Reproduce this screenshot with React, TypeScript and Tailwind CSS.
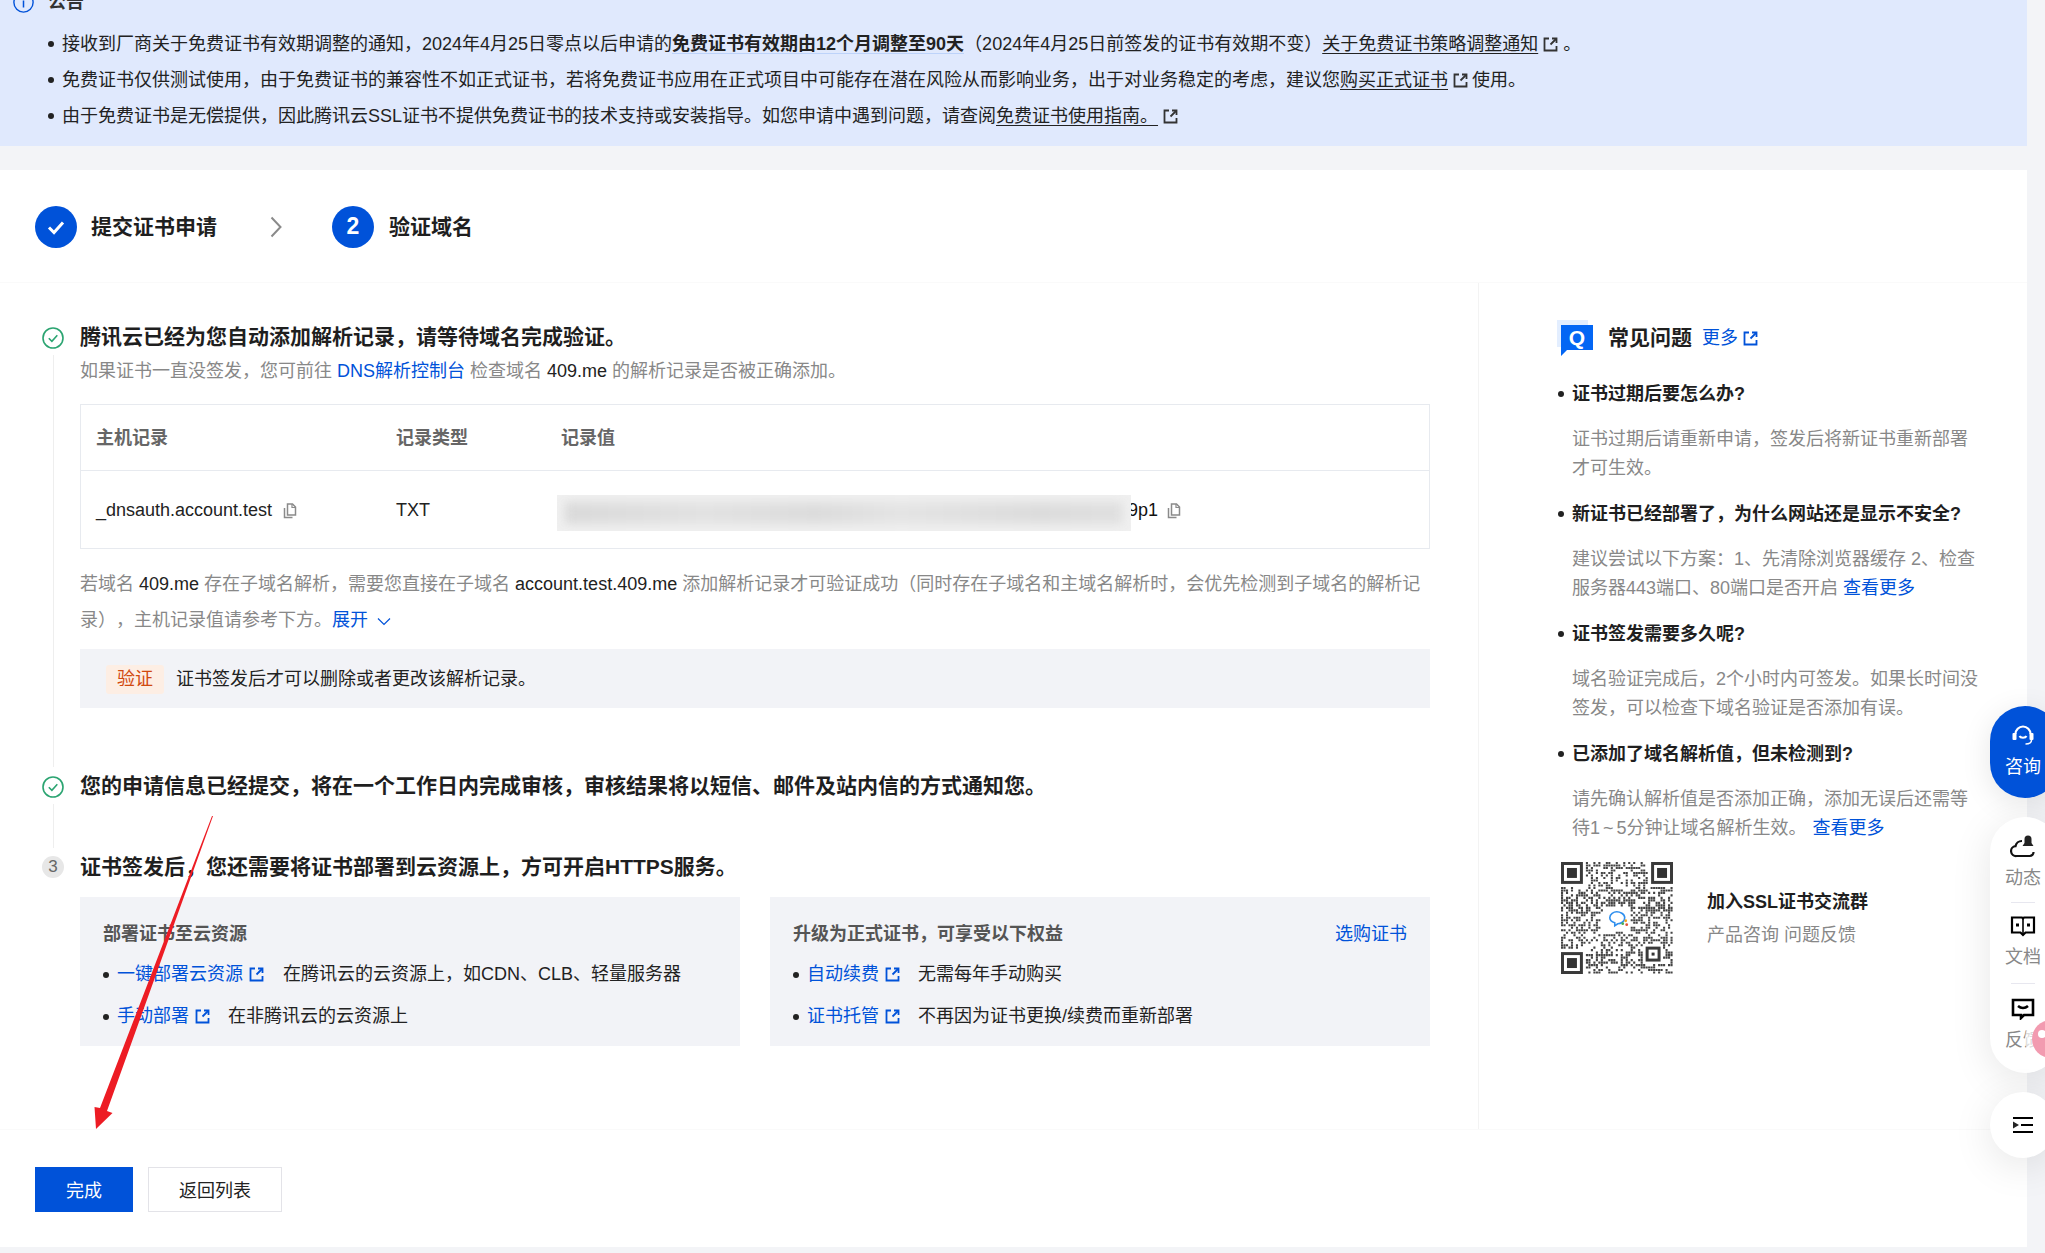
import React, { useMemo } from "react";

function Ext({ c = "#333" }: { c?: string }) {
  return (
    <svg width="15" height="15" viewBox="0 0 15 15" fill="none" className="inline-block shrink-0 align-[-2px]">
      <path d="M6 1.5H1.5v12h12V9" stroke={c} strokeWidth="1.8" />
      <path d="M9 1.5h4.5V6" stroke={c} strokeWidth="1.8" />
      <path d="M13 2L7.5 7.5" stroke={c} strokeWidth="1.8" />
    </svg>
  );
}

function Copy() {
  return (
    <svg width="14" height="16" viewBox="0 0 14 16" fill="none" className="inline-block shrink-0">
      <path d="M4.5 1h5l3 3v8h-8z" stroke="#8a8a8a" strokeWidth="1.5" />
      <path d="M1.5 5v9.5h8" stroke="#8a8a8a" strokeWidth="1.5" />
      <path d="M9 1v3.5h3.5" stroke="#8a8a8a" strokeWidth="1.2" />
    </svg>
  );
}

function Check() {
  return (
    <svg width="22" height="22" viewBox="0 0 22 22" fill="none" className="mt-[1px] shrink-0">
      <circle cx="11" cy="11" r="10" stroke="#2ba471" strokeWidth="1.6" />
      <path d="M6.8 11.2l3.1 3.1 5.4-6" stroke="#2ba471" strokeWidth="1.6" />
    </svg>
  );
}

function QR() {
  const d = useMemo(() => {
    let s = 20240425;
    const r = () => {
      s = (s + 0x6d2b79f5) | 0;
      let t = Math.imul(s ^ (s >>> 15), 1 | s);
      t = (t + Math.imul(t ^ (t >>> 7), 61 | t)) ^ t;
      return ((t ^ (t >>> 14)) >>> 0) / 4294967296;
    };
    const n = 45;
    const out: string[] = [];
    for (let y = 0; y < n; y++) {
      for (let x = 0; x < n; x++) {
        const f =
          (x < 10 && y < 10) || (x > 34 && y < 10) || (x < 10 && y > 34) || (x > 32 && x < 41 && y > 32 && y < 41);
        const l = x > 16 && x < 28 && y > 17 && y < 28;
        if (f || l) continue;
        if (r() < 0.45) out.push(`M${x * 2.5} ${y * 2.5}h2.1v2.1h-2.1z`);
      }
    }
    return out.join("");
  }, []);
  const finder = (x: number, y: number, k: string) => (
    <g key={k}>
      <rect x={x + 1.5} y={y + 1.5} width="19" height="19" fill="none" stroke="#3a3a3a" strokeWidth="3" />
      <rect x={x + 6} y={y + 6} width="10" height="10" fill="#333" />
    </g>
  );
  return (
    <svg width="112" height="112" viewBox="0 0 112.5 112.5" className="shrink-0">
      <path d={d} fill="#444" />
      {finder(0, 0, "a")}
      {finder(90.5, 0, "b")}
      {finder(0, 90.5, "c")}
      <rect x="86.5" y="86.5" width="12" height="12" fill="none" stroke="#3a3a3a" strokeWidth="3" />
      <rect x="91" y="91" width="3" height="3" fill="#333" />
      <g transform="translate(-1 6)">
        <path d="M50 50c0-4 4-6 7-6s8 2 8 6-4 6-7 6l-3 2v-3c-3-1-5-2-5-5z" fill="none" stroke="#2f8fee" strokeWidth="1.6" />
        <circle cx="66" cy="53" r="1.4" fill="#f5a623" />
        <circle cx="63" cy="56" r="1.4" fill="#4caf50" />
        <circle cx="67" cy="57" r="1.4" fill="#e0533d" />
      </g>
    </svg>
  );
}

function Row({ link, text, after }: { link: string; text: string; after: string }) {
  return (
    <div className="flex h-[42px] items-center">
      <span className="h-[6px] w-[6px] rounded-full bg-[#222]" />
      <a className="ml-[8px] text-[#0052d9]">{link}</a>
      <span className="ml-[6px] flex">
        <Ext c="#0052d9" />
      </span>
      <span className={after + " text-[#222]"}>{text}</span>
    </div>
  );
}

function Faq({ q, children }: { q: string; children: React.ReactNode }) {
  return (
    <div className="h-[120px]">
      <div className="flex h-[29px] items-center">
        <span className="ml-[1px] h-[6px] w-[6px] rounded-full bg-[#222]" />
        <span className="ml-[8px] font-bold text-[#1f1f1f]">{q}</span>
      </div>
      <div className="ml-[15px] mt-[16px] leading-[29.5px] whitespace-nowrap text-[#888]">{children}</div>
    </div>
  );
}

export default function App() {
  return (
    <div className="relative h-[1253px] w-[2045px] overflow-hidden bg-[#f3f4f7] font-['Liberation_Sans','Noto_Sans_CJK_SC',sans-serif] text-[18px] text-[#222] [text-spacing-trim:space-all]">
      <div className="w-[2027px]">
        {/* notice */}
        <section className="-mt-[16px] h-[162px] bg-[#e0e9fd] pl-[13px]">
          <div className="flex h-[36px] items-center">
            <svg width="21" height="21" viewBox="0 0 21 21" fill="none">
              <circle cx="10.5" cy="10.5" r="9.6" stroke="#0052d9" strokeWidth="1.4" />
              <path d="M10.5 5v1.8M10.5 8.5v7" stroke="#0052d9" strokeWidth="1.5" />
            </svg>
            <b className="ml-[14px] font-bold text-[#333]">公告</b>
          </div>
          <ul className="ml-[35px] mt-[6px] leading-[36px] whitespace-nowrap text-[#222]">
            <li className="flex items-center">
              <span className="mr-[8px] h-[6px] w-[6px] rounded-full bg-[#222]" />
              <span>
                接收到厂商关于免费证书有效期调整的通知，2024年4月25日零点以后申请的
                <b className="bg-[linear-gradient(#bdd3fa,#bdd3fa)] bg-[length:100%_5px] bg-[position:0_19px] bg-no-repeat font-bold">
                  免费证书有效期由12个月调整至90天
                </b>
                （2024年4月25日前签发的证书有效期不变）
                <a className="underline decoration-1 underline-offset-[3px] [text-decoration-skip-ink:none]">关于免费证书策略调整通知</a>
                <span className="ml-[5px]">
                  <Ext />
                </span>
                <span className="ml-[5px]">。</span>
              </span>
            </li>
            <li className="flex items-center">
              <span className="mr-[8px] h-[6px] w-[6px] rounded-full bg-[#222]" />
              <span>
                免费证书仅供测试使用，由于免费证书的兼容性不如正式证书，若将免费证书应用在正式项目中可能存在潜在风险从而影响业务，出于对业务稳定的考虑，建议您
                <a className="underline decoration-1 underline-offset-[3px] [text-decoration-skip-ink:none]">购买正式证书</a>
                <span className="ml-[5px]">
                  <Ext />
                </span>
                <span className="ml-[4px]">使用。</span>
              </span>
            </li>
            <li className="flex items-center">
              <span className="mr-[8px] h-[6px] w-[6px] rounded-full bg-[#222]" />
              <span>
                由于免费证书是无偿提供，因此腾讯云SSL证书不提供免费证书的技术支持或安装指导。如您申请中遇到问题，请查阅
                <a className="underline decoration-1 underline-offset-[3px] [text-decoration-skip-ink:none]">免费证书使用指南。</a>
                <span className="ml-[5px]">
                  <Ext />
                </span>
              </span>
            </li>
          </ul>
        </section>

        <main className="mt-[24px] h-[1077px] bg-white">
          {/* steps */}
          <div className="flex h-[113px] items-center border-b border-[#fafafa] pl-[35px] pt-[1px]">
            <span className="flex h-[42px] w-[42px] items-center justify-center rounded-full bg-[#0052d9]">
              <svg width="22" height="22" viewBox="0 0 22 22" fill="none">
                <path d="M4 11.5l5 5 9-10" stroke="#fff" strokeWidth="3" />
              </svg>
            </span>
            <span className="ml-[14px] mt-[1px] text-[21px] font-bold text-[#1f1f1f]">提交证书申请</span>
            <svg width="16" height="24" viewBox="0 0 16 24" fill="none" className="ml-[51px]">
              <path d="M3.5 2.5L12.5 12l-9 9.5" stroke="#8a8a8a" strokeWidth="2" />
            </svg>
            <span className="ml-[48px] flex h-[42px] w-[42px] items-center justify-center rounded-full bg-[#0052d9] text-[23px] font-bold text-white">
              2
            </span>
            <span className="ml-[15px] mt-[1px] text-[21px] font-bold text-[#1f1f1f]">验证域名</span>
          </div>

          {/* body */}
          <div className="flex h-[847px] border-b border-[#fafafa]">
            <div className="w-[1478px] pl-[42px] pt-[43px]">
              {/* step one */}
              <div className="flex h-[449px]">
                <div className="flex w-[22px] flex-col items-center">
                  <Check />
                  <span className="mb-[8px] mt-[6px] w-px flex-1 bg-[#eeeeee]" />
                </div>
                <div className="ml-[16px] w-[1350px]">
                  <h2 className="h-[22px] text-[21px] leading-[22px] font-bold text-[#1f1f1f]">
                    腾讯云已经为您自动添加解析记录，请等待域名完成验证。
                  </h2>
                  <p className="mt-[9px] leading-[29px] text-[#888]">
                    如果证书一直没签发，您可前往 <a className="text-[#0052d9]">DNS解析控制台</a> 检查域名{" "}
                    <span className="text-[#222]">409.me</span> 的解析记录是否被正确添加。
                  </p>
                  <div className="mt-[18px] h-[145px] border border-[#e7eaef]">
                    <div className="grid h-[66px] grid-cols-[300px_165px_1fr] items-center border-b border-[#e7eaef] pl-[15px] pt-[2px] font-bold text-[#666]">
                      <span>主机记录</span>
                      <span>记录类型</span>
                      <span>记录值</span>
                    </div>
                    <div className="grid h-[77px] grid-cols-[300px_165px_1fr] items-center pl-[15px] pt-[2px] text-[#222]">
                      <span className="flex items-center">
                        _dnsauth.account.test
                        <span className="ml-[11px] flex">
                          <Copy />
                        </span>
                      </span>
                      <span>TXT</span>
                      <span className="flex items-center">
                        <span className="relative z-10 -ml-[4px] mt-[5px] h-[36px] w-[574px] overflow-hidden bg-[#f0f0f0]">
                          <span className="mx-[8px] mt-[7px] block h-[22px] bg-[linear-gradient(90deg,#dadada,#e2e2e2_25%,#dcdcdc_45%,#e4e4e4_60%,#dcdcdc_85%,#e0e0e0)] blur-[5px]" />
                        </span>
                        <span className="-ml-[3px] text-[#111]">9p1</span>
                        <span className="ml-[9px] flex">
                          <Copy />
                        </span>
                      </span>
                    </div>
                  </div>
                  <p className="mt-[17px] leading-[36px] whitespace-nowrap text-[#888]">
                    若域名 <span className="text-[#222]">409.me</span> 存在子域名解析，需要您直接在子域名{" "}
                    <span className="text-[#222]">account.test.409.me</span>{" "}
                    添加解析记录才可验证成功（同时存在子域名和主域名解析时，会优先检测到子域名的解析记
                    <br />
                    录），主机记录值请参考下方。
                    <a className="text-[#0052d9]">展开</a>
                    <svg width="14" height="9" viewBox="0 0 14 9" fill="none" className="ml-[9px] inline-block">
                      <path d="M1 1.5l6 6 6-6" stroke="#0052d9" strokeWidth="1.2" />
                    </svg>
                  </p>
                  <div className="mt-[11px] flex h-[59px] items-center bg-[#f2f3f7] pl-[26px] pt-[1px]">
                    <span className="flex h-[29px] w-[58px] items-center justify-center rounded-[3px] bg-[#fdeee4] text-[#d1490f]">
                      验证
                    </span>
                    <span className="ml-[12px] text-[#222]">证书签发后才可以删除或者更改该解析记录。</span>
                  </div>
                </div>
              </div>

              {/* step two */}
              <div className="flex h-[81px]">
                <div className="flex w-[22px] flex-col items-center">
                  <Check />
                  <span className="mb-[8px] mt-[6px] w-px flex-1 bg-[#eeeeee]" />
                </div>
                <h2 className="ml-[16px] h-[22px] text-[21px] leading-[22px] font-bold text-[#1f1f1f]">
                  您的申请信息已经提交，将在一个工作日内完成审核，审核结果将以短信、邮件及站内信的方式通知您。
                </h2>
              </div>

              {/* step three */}
              <div className="flex">
                <span className="flex h-[22px] w-[22px] shrink-0 items-center justify-center rounded-full bg-[#e7e7e7] text-[17px] text-[#666]">
                  3
                </span>
                <div className="ml-[16px] w-[1350px]">
                  <h2 className="h-[22px] text-[21px] leading-[22px] font-bold text-[#1f1f1f]">
                    证书签发后，您还需要将证书部署到云资源上，方可开启HTTPS服务。
                  </h2>
                  <div className="mt-[19px] grid grid-cols-2 gap-[30px]">
                    <div className="h-[149px] bg-[#f2f3f7] px-[23px] pt-[23px]">
                      <div className="h-[28px] leading-[28px] font-bold text-[#555]">部署证书至云资源</div>
                      <div className="mt-[5.5px]">
                        <Row link="一键部署云资源" text="在腾讯云的云资源上，如CDN、CLB、轻量服务器" after="ml-[19px]" />
                        <Row link="手动部署" text="在非腾讯云的云资源上" after="ml-[18px]" />
                      </div>
                    </div>
                    <div className="h-[149px] bg-[#f2f3f7] px-[23px] pt-[23px]">
                      <div className="flex h-[28px] items-center justify-between">
                        <span className="font-bold text-[#555]">升级为正式证书，可享受以下权益</span>
                        <a className="text-[#0052d9]">选购证书</a>
                      </div>
                      <div className="mt-[5.5px]">
                        <Row link="自动续费" text="无需每年手动购买" after="ml-[18px]" />
                        <Row link="证书托管" text="不再因为证书更换/续费而重新部署" after="ml-[18px]" />
                      </div>
                    </div>
                  </div>
                </div>
              </div>
            </div>

            {/* faq */}
            <aside className="flex-1 border-l border-[#f3f3f3] pl-[78px] pt-[37px]">
              <div className="flex h-[36px] items-center">
                <svg width="36" height="36" viewBox="0 0 36 36" className="shrink-0">
                  <rect x="0" y="0" width="31" height="27" fill="#e3eeff" />
                  <path d="M4 5h32v25H10L4 36z" fill="#0366f4" />
                  <text x="20" y="25" textAnchor="middle" fontFamily="Liberation Sans" fontWeight="700" fontSize="21" fill="#fff">
                    Q
                  </text>
                </svg>
                <b className="ml-[15px] text-[21px] font-bold text-[#1f1f1f]">常见问题</b>
                <a className="ml-[10px] text-[#0052d9]">更多</a>
                <span className="ml-[5px] flex">
                  <Ext c="#0052d9" />
                </span>
              </div>
              <div className="mt-[23.5px]">
                <Faq q="证书过期后要怎么办?">
                  证书过期后请重新申请，签发后将新证书重新部署
                  <br />
                  才可生效。
                </Faq>
                <Faq q="新证书已经部署了，为什么网站还是显示不安全?">
                  建议尝试以下方案：1、先清除浏览器缓存 2、检查
                  <br />
                  服务器443端口、80端口是否开启 <a className="text-[#0052d9]">查看更多</a>
                </Faq>
                <Faq q="证书签发需要多久呢?">
                  域名验证完成后，2个小时内可签发。如果长时间没
                  <br />
                  签发，可以检查下域名验证是否添加有误。
                </Faq>
                <Faq q="已添加了域名解析值，但未检测到?">
                  请先确认解析值是否添加正确，添加无误后还需等
                  <br />
                  待1<span className="mx-[3px]">~</span>5分钟让域名解析生效。 <a className="ml-[1px] text-[#0052d9]">查看更多</a>
                </Faq>
              </div>
              <div className="ml-[4px] mt-[2.5px] flex">
                <QR />
                <div className="ml-[34px] mt-[23.5px] leading-[33px]">
                  <div className="font-bold text-[#1f1f1f]">加入SSL证书交流群</div>
                  <div className="text-[#888]">产品咨询 问题反馈</div>
                </div>
              </div>
            </aside>
          </div>

          {/* footer */}
          <div className="flex gap-[15px] pl-[35px] pt-[37px]">
            <button className="h-[45px] w-[98px] bg-[#0052d9] pt-[3px] text-white">完成</button>
            <button className="h-[45px] w-[134px] border border-[#e3e3e8] bg-white pt-[3px] text-[#222]">返回列表</button>
          </div>
        </main>
      </div>

      {/* floating tools */}
      <div className="absolute left-[1990px] top-[706px] flex h-[92px] w-[70px] flex-col items-center rounded-[35px] bg-[#0052d9] pr-[4px] pt-[16px] text-white shadow-[0_6px_30px_rgba(0,0,0,0.1)]">
        <svg width="26" height="26" viewBox="0 0 26 26" fill="none">
          <path d="M5.5 12a7.5 7.5 0 0 1 15 0" stroke="#fff" strokeWidth="2.2" />
          <rect x="2.5" y="11" width="4" height="7" rx="1" fill="#fff" />
          <rect x="19.5" y="11" width="4" height="7" rx="1" fill="#fff" />
          <path d="M9.5 14c1 2.2 6 2.2 7 0" stroke="#fff" strokeWidth="2" />
          <path d="M21.5 18c0 3-3 4-6 4" stroke="#fff" strokeWidth="1.5" />
        </svg>
        <span className="mt-[8px] leading-[22px]">咨询</span>
      </div>

      <div className="absolute left-[1990px] top-[817px] flex h-[256px] w-[70px] flex-col items-center rounded-[35px] bg-white pr-[4px] pt-[17px] text-[#888] shadow-[0_8px_40px_rgba(0,0,0,0.1)]">
        <svg width="26" height="26" viewBox="0 0 26 26" fill="none" className="shrink-0">
          <path d="M12 7a6.5 6.5 0 0 0-6.5 5.2A4.6 4.6 0 0 0 6.5 22h13a3.8 3.8 0 0 0 4-4" stroke="#111" strokeWidth="2.2" />
          <path d="M18 1.5a3.5 3.5 0 0 1 3.5 3.5v4l2 3h-11l2-3V5A3.5 3.5 0 0 1 18 1.5z" fill="#222" />
        </svg>
        <span className="mt-[6px] leading-[24px]">动态</span>
        <span className="mt-[12px] h-px w-[24px] bg-[#e7e7ef]" />
        <svg width="26" height="24" viewBox="0 0 26 24" fill="none" className="mt-[11px] shrink-0">
          <path d="M2 3.5h10l1 1 1-1h10v15h-8.5L13 21l-2.5-2.5H2z" stroke="#000" strokeWidth="2.2" />
          <path d="M13 4.5V20" stroke="#000" strokeWidth="1.6" />
          <rect x="6" y="9.5" width="3" height="3" fill="#000" />
          <rect x="17" y="9.5" width="3" height="3" fill="#000" />
        </svg>
        <span className="mt-[7px] leading-[24px]">文档</span>
        <span className="mt-[14px] h-px w-[24px] bg-[#e7e7ef]" />
        <svg width="24" height="22" viewBox="0 0 24 22" fill="none" className="mt-[14px] shrink-0">
          <path d="M2 2h20v15h-9l-3 3v-3H2z" stroke="#000" strokeWidth="2.6" />
          <path d="M7 8c3 2.5 7 2.5 10 0" stroke="#000" strokeWidth="2.6" />
        </svg>
        <span className="mt-[8px] leading-[24px]">反馈</span>
      </div>

      {/* decorative mascot at the edge */}
      <div className="absolute left-[2025px] top-[1010px] flex h-[58px] w-[58px] items-center rounded-full bg-white/70 pl-[7px]">
        <span className="flex h-[38px] w-[38px] rounded-full bg-[#f29bb0] pl-[6px] pt-[10px]">
          <span className="h-[8px] w-[8px] rounded-sm bg-white" />
        </span>
      </div>

      <div className="absolute left-[1990px] top-[1092px] flex h-[66px] w-[66px] items-center justify-center rounded-full bg-white shadow-[0_8px_40px_rgba(0,0,0,0.1)]">
        <svg width="20" height="18" viewBox="0 0 20 18" fill="none">
          <path d="M0 2h20M8 9h12M0 16h20" stroke="#000" strokeWidth="2" />
          <path d="M0 5.5L6 9l-6 3.5z" fill="#222" />
        </svg>
      </div>

      {/* red annotation arrow */}
      <svg width="2045" height="1253" viewBox="0 0 2045 1253" className="pointer-events-none absolute left-0 top-0">
        <path d="M213 816L107 1111L112.5 1113L96 1129L94.5 1107L100 1108L212 816z" fill="#ed1c24" />
      </svg>
    </div>
  );
}
